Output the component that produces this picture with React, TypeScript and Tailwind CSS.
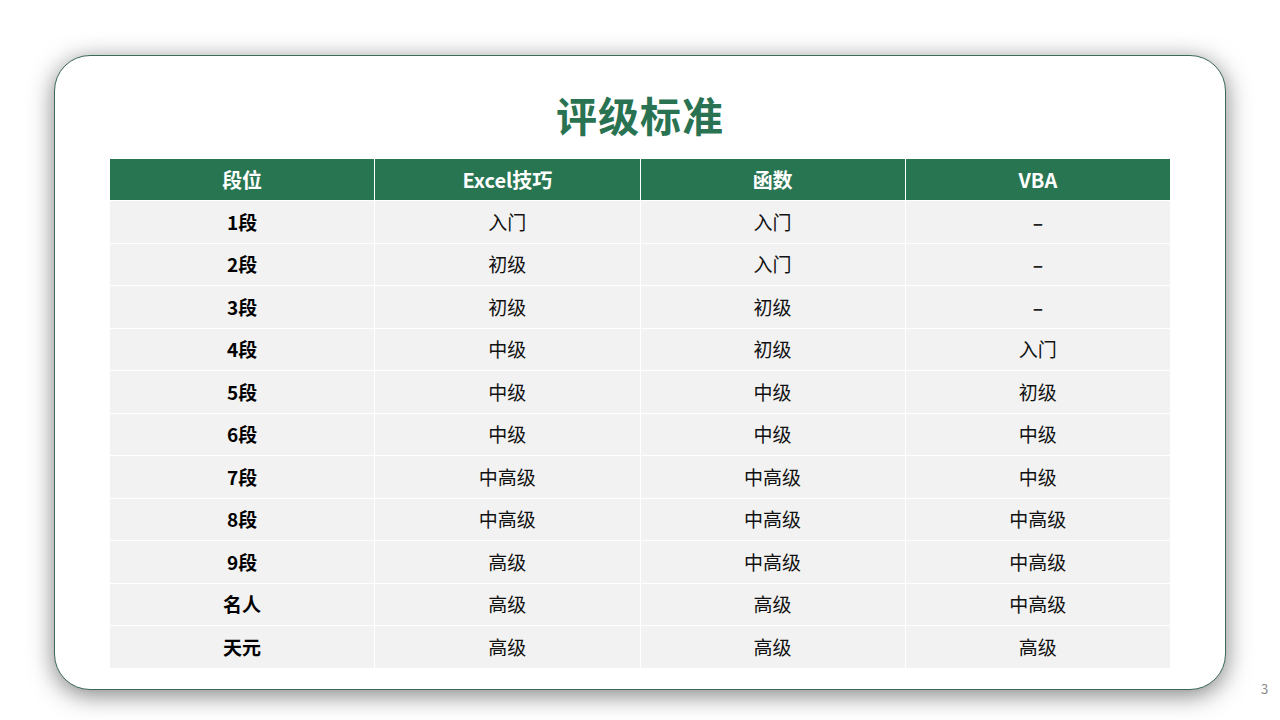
const FONT = { fontFamily: '"Noto Sans CJK SC", "Noto Sans", sans-serif' };

const headers = ["段位", "Excel技巧", "函数", "VBA"];

const rows: string[][] = [
  ["1段", "入门", "入门", "–"],
  ["2段", "初级", "入门", "–"],
  ["3段", "初级", "初级", "–"],
  ["4段", "中级", "初级", "入门"],
  ["5段", "中级", "中级", "初级"],
  ["6段", "中级", "中级", "中级"],
  ["7段", "中高级", "中高级", "中级"],
  ["8段", "中高级", "中高级", "中高级"],
  ["9段", "高级", "中高级", "中高级"],
  ["名人", "高级", "高级", "中高级"],
  ["天元", "高级", "高级", "高级"],
];

export default function App() {
  return (
    <div className="relative h-[720px] w-[1280px] overflow-hidden bg-white" style={FONT}>
      <div className="flex px-[54px] pt-[55px]">
        <div className="flex h-[635px] w-[1172px] flex-col items-center rounded-[36px] border-[1.5px] border-[#3b6a55] bg-white shadow-[0_5px_24px_rgba(0,0,0,0.5)]">
          <h1 className="mt-[32px] h-[52px] text-[41px] font-bold leading-[52px] tracking-[1px] text-[#2a7352]">
            评级标准
          </h1>
          <div className="mt-[19px] grid w-[1060px] grid-cols-4 gap-px bg-white">
            {headers.map((h) => (
              <div
                key={h}
                className="flex h-[41px] items-center justify-center bg-[#287552] text-[20px] font-bold text-white"
              >
                {h}
              </div>
            ))}
            {rows.map((r) =>
              r.map((c, i) => (
                <div
                  key={r[0] + i}
                  className={
                    i === 0
                      ? "flex h-[41.5px] items-center justify-center bg-[#f2f2f2] text-[19px] font-bold text-black"
                      : c === "–"
                        ? "flex h-[41.5px] items-center justify-center bg-[#f2f2f2] text-[19px] font-bold text-[#222]"
                        : "flex h-[41.5px] items-center justify-center bg-[#f2f2f2] text-[19px] text-[#111]"
                  }
                >
                  {c}
                </div>
              )),
            )}
          </div>
        </div>
      </div>
      <span className="absolute left-[1261px] top-[679px] text-[13px] text-[#8a8a8a]">3</span>
    </div>
  );
}
